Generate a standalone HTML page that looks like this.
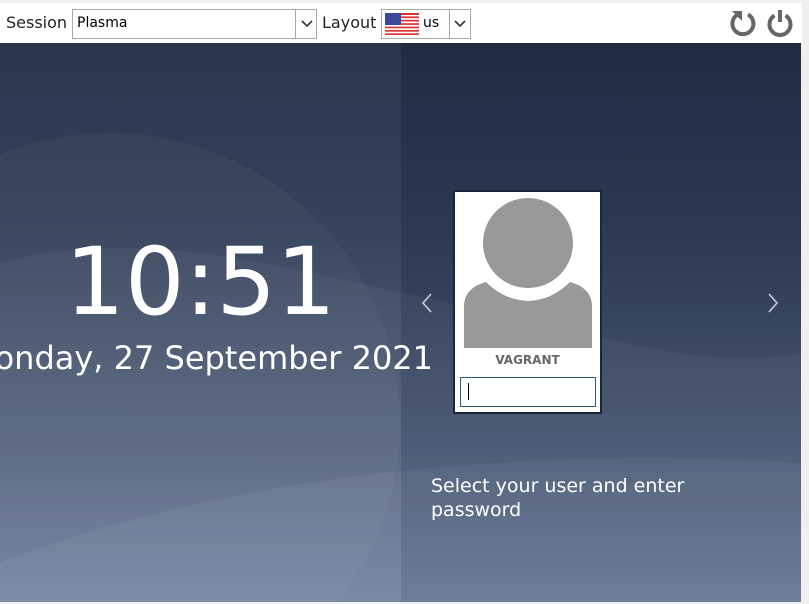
<!DOCTYPE html>
<html style="overflow:hidden"><head><meta charset="utf-8"><style>
*{margin:0;padding:0;box-sizing:border-box}
body{width:809px;height:604px;overflow:hidden;background:#efefef;font-family:"DejaVu Sans","Liberation Sans",sans-serif;position:relative}
#top{position:absolute;left:0;top:3px;width:802px;height:40px;background:#fff}
.lbl{position:absolute;top:13px;font-size:16px;color:#222}
.box{position:absolute;border:1px solid #aaa;background:#fff;height:30px;top:9px}
#bg{position:absolute;left:0;top:43px;width:801px;height:559px;overflow:hidden;
background:linear-gradient(180deg,#222e45 0%,#2f3d56 35%,#4b5b77 70%,#687b9c 100%)}
#left{position:absolute;left:0;top:0;width:401px;height:100%;background:rgba(255,255,255,0.04)}
#right{position:absolute;left:401px;top:0;right:0;height:100%;background:rgba(10,20,40,0.08)}
</style></head><body>
<div id="top">
<div class="lbl" style="left:6px;top:10px">Session</div>
<div class="box" style="left:72px;top:6px;width:245px"><span style="position:absolute;left:4px;top:5px;font-size:14px">Plasma</span><div style="position:absolute;left:222px;top:-1px;width:1px;height:30px;background:#aaa"></div><svg style="position:absolute;left:227px;top:9px" width="14" height="10"><path d="M2 2 L7 7 L12 2" stroke="#333" stroke-width="1.6" fill="none"/></svg></div>
<div class="lbl" style="left:322px;top:10px">Layout</div>
<div class="box" style="left:381px;top:6px;width:90px"><svg style="position:absolute;left:3px;top:3px" width="34" height="22"><rect width="34" height="22" fill="#fff"/><g fill="#d33"><rect y="0" width="34" height="2"/><rect y="3.4" width="34" height="1.7"/><rect y="6.8" width="34" height="1.7"/><rect y="10.2" width="34" height="1.7"/><rect y="13.6" width="34" height="1.7"/><rect y="17" width="34" height="1.7"/><rect y="20.3" width="34" height="1.7"/></g><rect width="16" height="12" fill="#3b4a9a"/></svg><span style="position:absolute;left:41px;top:5px;font-size:14px">us</span><div style="position:absolute;left:67px;top:-1px;width:1px;height:30px;background:#aaa"></div><svg style="position:absolute;left:71px;top:9px" width="14" height="10"><path d="M2 2 L7 7 L12 2" stroke="#333" stroke-width="1.6" fill="none"/></svg></div>
<svg style="position:absolute;left:728px;top:5px" width="30" height="30" viewBox="0 0 30 30"><path d="M9 7 A10.5 10.5 0 1 0 20 6.5" stroke="#666" stroke-width="4" fill="none"/><path d="M4 3 L14 3 L14 13 Z" fill="#666"/></svg>
<svg style="position:absolute;left:765px;top:5px" width="30" height="30" viewBox="0 0 30 30"><path d="M9.5 7.5 A10.5 10.5 0 1 0 20.5 7.5" stroke="#666" stroke-width="4" fill="none"/><path d="M15 2 V14" stroke="#666" stroke-width="4"/></svg>
</div>
<div id="bg">
<svg style="position:absolute;left:0;top:0" width="801" height="559">
<path d="M0 220 C150 180 300 230 450 260 C600 290 700 330 801 310 L801 559 L0 559Z" fill="rgba(255,255,255,0.04)"/>
<path d="M0 520 C200 440 500 400 801 420 L801 559 L0 559Z" fill="rgba(255,255,255,0.05)"/>
<circle cx="110" cy="380" r="290" fill="rgba(255,255,255,0.03)"/>
</svg>
<div id="left"></div><div id="right"></div>
<div style="position:absolute;left:0;width:401px;top:185px;text-align:center;color:#fff;font-size:94px;line-height:110px">10:51</div>
<div style="position:absolute;left:-100px;width:600px;top:295px;text-align:center;color:#fff;font-size:32px;line-height:40px">Monday, 27 September 2021</div>
<svg style="position:absolute;left:420px;top:249px" width="14" height="22"><path d="M11 2 L3 11 L11 20" stroke="#ccd" stroke-width="1.6" fill="none"/></svg>
<svg style="position:absolute;left:766px;top:249px" width="14" height="22"><path d="M3 2 L11 11 L3 20" stroke="#ccd" stroke-width="1.6" fill="none"/></svg>
<div style="position:absolute;left:453px;top:147px;width:149px;height:224px;background:#fff;border:2px solid #1c2638">
<svg style="position:absolute;left:9px;top:4px" width="128" height="152"><circle cx="64" cy="47" r="45" fill="#999"/><path d="M0 152 V110 Q0 92 22 86 Q40 104 64 105 Q88 104 106 86 Q128 92 128 110 V152Z" fill="#999"/></svg>
<div style="position:absolute;left:0;width:100%;top:161px;text-align:center;font-size:12px;font-weight:bold;color:#666">VAGRANT</div>
<div style="position:absolute;left:5px;top:185px;width:136px;height:30px;border:1px solid #2a5a80"><div style="position:absolute;left:7px;top:5px;width:1px;height:17px;background:#000"></div></div>
</div>
<div style="position:absolute;left:431px;top:431px;color:#fff;font-size:19px;line-height:24px;width:320px">Select your user and enter password</div>
</div>
</body></html>
